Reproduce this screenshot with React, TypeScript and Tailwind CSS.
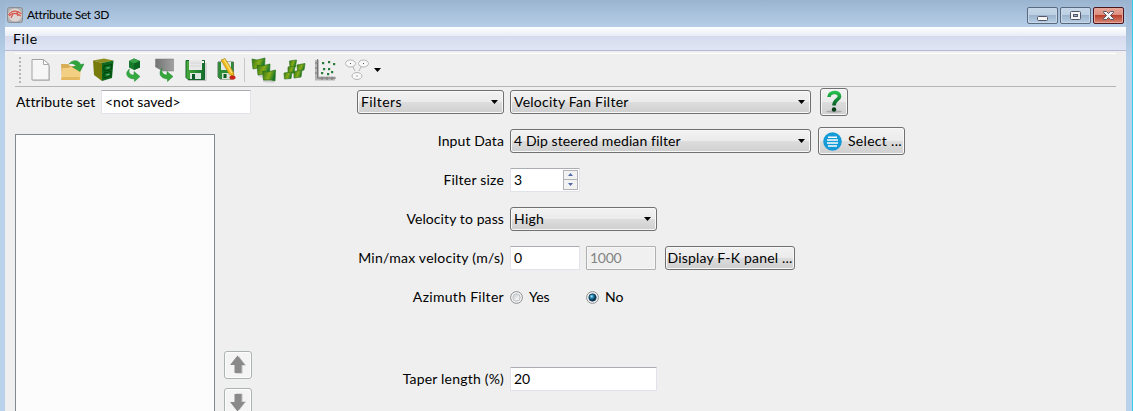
import React, { useState } from "react";

const NewIcon = () => (
  <svg width="24" height="24" viewBox="0 0 24 24">
    <path d="M4 2.500h11l6 6v14.500H4z" fill="#888" opacity=".35" />
    <path d="M3 1.500h11.500l5.500 5v15.500H3z" fill="#f6f6f6" stroke="#a2a2a2" />
    <path d="M14.500 1.500v5H20z" fill="#fff" stroke="#aaa" />
  </svg>
);
const OpenIcon = () => (
  <svg width="24" height="24" viewBox="0 0 24 24">
    <path d="M1 6h7l2 2h10v13H2z" fill="#d9ad55" />
    <path d="M1 22l1.500-12H8l2-1h11l-1 13z" fill="#f3cf83" />
    <path d="M1 22h18.500l.5-3H2z" fill="#e5b860" />
    <path d="M9 6C13 1 19 2 20.500 6.500L24 6l-4 7.500L12.500 9l3.500-.6C14.500 5.500 12 5 9 6z" fill="#30a43b" stroke="#17872a" strokeWidth=".5" />
  </svg>
);
const CabinetIcon = () => (
  <svg width="24" height="24" viewBox="0 0 24 24">
    <path d="M2 2.500L13 .5l9.500 2L11 5z" fill="#8d9020" />
    <path d="M2 2.500L11 5v18l-8-6z" fill="#777b09" />
    <path d="M11 5l11.500-2.500L21 20l-10 3z" fill="#0d681c" />
    <path d="M13 8l7.500-1.500-.3 5L13 13zM13 15l7-1.500-.3 4.500L13 20z" fill="#087525" stroke="#003f0b" />
    <path d="M15.500 9.500l3-.5v1.200l-3 .6zM15.500 16.300l3-.6v1.200l-3 .6z" fill="#7ab07c" />
  </svg>
);
const ImportIcon = () => (
  <svg width="24" height="24" viewBox="0 0 24 24">
    <path d="M7 3l5-2.500L18 3v6.500L12 12 7 9.500z" fill="#177a2c" />
    <path d="M7 3l5-2.500L18 3l-6 2.500z" fill="#39a14a" />
    <path d="M12 5.500L18 3v6.500L12 12z" fill="#0a6520" />
    <path d="M7.500 11C6 15 8.500 17 12 17v-3.500l6 5-5.500 5V21C5 21 2 15 7.500 11z" fill="#35aa3f" stroke="#238a34" strokeWidth=".5" />
  </svg>
);
const ScreenIcon = () => (
  <svg width="24" height="24" viewBox="0 0 24 24">
    <defs><linearGradient id="screen"><stop stopColor="#737573" /><stop offset="1" stopColor="#a0a1a0" /></linearGradient></defs>
    <path d="M2.500 1h18v12H10L2.500 9z" fill="url(#screen)" stroke="#777" strokeWidth=".5" />
    <path d="M9 10C8 14 10 17 14 17v-3.500l6 5-5.500 5V21C7 20.500 5 15 9 10z" fill="#35a83b" stroke="#208331" strokeWidth=".5" />
  </svg>
);
const SaveIcon = () => (
  <svg width="24" height="24" viewBox="0 0 24 24">
    <defs><linearGradient id="save"><stop stopColor="#48ac3b" /><stop offset="1" stopColor="#136e2c" /></linearGradient></defs>
    <path d="M4 22.500h18V5" fill="none" stroke="#999" opacity=".6" />
    <path d="M2 2.500h18.500v19H4l-2-2z" fill="url(#save)" stroke="#14652b" />
    <path d="M5 2h13v10H5z" fill="#e8e8e8" />
    <path d="M6 5h11M6 8h11" stroke="#d6d6d6" />
    <path d="M6 15h11v6H6z" fill="#dce8df" />
    <path d="M8 16h3v5H8z" fill="#075a25" />
    <path d="M18 3h2v2h-2z" fill="#f3fff3" />
  </svg>
);
const SaveAsIcon = () => (
  <svg width="24" height="24" viewBox="0 0 24 24">
    <path d="M3 4h15.500v17H5l-2-2z" fill="#2b8e36" stroke="#56795a" />
    <path d="M6 4h10v8H6z" fill="#e5e9e5" /><path d="M7 15h9v6H7z" fill="#d8e4d8" /><path d="M8.500 16h3v4h-3z" fill="#0b5b20" />
    <path d="M6 2l4-1.500 8.500 14 .5 4-4.500-2z" fill="#f2b91a" stroke="#b08923" strokeWidth=".7" />
    <path d="M9 1.500l8 13.500" stroke="#ffe47a" strokeWidth="1.300" />
    <ellipse cx="17.500" cy="19.500" rx="3" ry="2" fill="#ca2118" />
  </svg>
);
const CascadeIcon = () => (
  <svg width="26" height="26" viewBox="0 0 26 26">
    <defs><linearGradient id="leaf" x2="1" y2=".3"><stop stopColor="#2c7016" /><stop offset=".6" stopColor="#8bae18" /><stop offset="1" stopColor="#16752a" /></linearGradient></defs>
    <path d="M4 13l3 1v5l5 2v4l11 1-1-12" fill="#999" opacity=".35" />
    {["M1 2l5 1 8-2-.5 9-4 .5L2 12z", "M6 8l5 1 8-2-.5 9-4 .5L7 18z", "M11.500 14l5 1 8-2-.5 11-4-1-7.500 0z"].map((d) => <path key={d} d={d} fill="url(#leaf)" stroke="#29741b" strokeWidth=".7" />)}
  </svg>
);
const CrossIcon = () => (
  <svg width="26" height="26" viewBox="0 0 26 26">
    {["M7.500 4l7-1-1 7H8z", "M15 8l8-1.500-1 6.500-6.500 1z", "M6 10l7-1-1 7H6z", "M12 14.500l8-1.500-1 7-7 1z", "M2 16l8-1-1 6.500-6.500.5z"].map((d) => <path key={d} d={d} fill="url(#leaf)" stroke="#34781b" strokeWidth=".7" />)}
  </svg>
);
const ScatterIcon = () => (
  <svg width="24" height="24" viewBox="0 0 24 24">
    <path d="M3 2v18.500h18" fill="none" stroke="#b5b5b5" strokeWidth="4" />
    <path d="M3.500 1v19H22M1 5h3M1 10h3M1 15h3M8 19v3M13 19v3M18 19v3" fill="none" stroke="#777" />
    {[[8, 4], [14, 3], [19, 5], [9, 10], [14, 10], [7, 14], [17, 13], [13, 15]].map(([x, y]) => <rect key={`${x}-${y}`} x={x} y={y} width="2.200" height="2.200" fill="#277b3a" />)}
  </svg>
);
const NodesIcon = () => (
  <svg width="26" height="26" viewBox="0 0 26 26" fill="#f8f8f8" stroke="#b5b5b5">
    <path d="M8 8l3 6M18 8l-3 6" />
    <ellipse cx="6.500" cy="6.500" rx="5" ry="3.500" /><ellipse cx="19.500" cy="6.500" rx="5" ry="3.500" /><ellipse cx="13" cy="19" rx="5" ry="3.500" />
    <path d="M6 6.500h1M19 6.500h1M12.500 19h1" stroke="#555" />
  </svg>
);

const icons = [NewIcon, OpenIcon, CabinetIcon, ImportIcon, ScreenIcon, SaveIcon, SaveAsIcon];
const plots = [CascadeIcon, CrossIcon, ScatterIcon, NodesIcon];

const Triangle = () => <svg className="shrink-0" width="7" height="4" viewBox="0 0 7 4"><path d="M0 0h7L3.500 4z" fill="#000" /></svg>;

const raised = "flex shrink-0 items-center rounded-[3px] border border-[#707070] bg-[linear-gradient(#f2f2f2,#ebebeb_50%,#dddddd_50%,#cfcfcf)] shadow-[inset_0_0_0_1px_#f8f8f8]";
const field = "h-6 shrink-0 rounded-[1px] border border-[#e2e3ea] border-t-[#abadb3] bg-white pb-px pl-[3px] outline-none";
const caption = "h-[17px] w-[31px] rounded-[2px] border border-[#596a7f] bg-[linear-gradient(#c5d6e8,#bdd0e3_45%,#98b1ca_45%,#b8cee4)] shadow-[inset_0_0_0_1px_#c5d7e9]";

function Combo({ text, className }: { text: string; className: string }) {
  return (
    <button className={`h-6 justify-between pl-[3px] pr-[5px] ${raised} ${className}`}>
      <span className="whitespace-nowrap">{text}</span><Triangle />
    </button>
  );
}

function Row({ label, tracking, children }: { label: string; tracking: string; children: React.ReactNode }) {
  return (
    <div className="flex h-[30px] items-center">
      <span className={`mr-1.5 w-[163px] shrink-0 whitespace-nowrap text-right ${tracking}`}>{label}</span>
      {children}
    </div>
  );
}

function Radio({ on, onClick, label }: { on: boolean; onClick: () => void; label: string }) {
  return (
    <button onClick={onClick} className="flex w-[76px] items-center gap-1.5">
      <svg width="13" height="13" viewBox="0 0 13 13">
        <defs><radialGradient id="dot" cx=".38" cy=".35"><stop stopColor="#b2e6fa" /><stop offset=".5" stopColor="#2383b3" /><stop offset="1" stopColor="#0b3850" /></radialGradient></defs>
        <circle cx="6.500" cy="6.500" r="5.900" fill="#f4f4f4" stroke="#8b8e90" />
        <circle cx="6.500" cy="6.500" r="3.700" fill={on ? "url(#dot)" : "#dcdfe1"} stroke={on ? "#123a55" : "#b5b9bc"} strokeWidth=".8" />
        {!on && <path d="M4 9l5-5v5z" fill="#f0f0f0" />}
      </svg>
      <span>{label}</span>
    </button>
  );
}

function MoveButton({ down = false }: { down?: boolean }) {
  return (
    <button className="flex size-7 items-center justify-center rounded-[3px] border border-[#adb2b5] bg-[#f4f4f4] shadow-[inset_0_0_0_1px_#fcfcfc]">
      <svg width="18" height="22" viewBox="0 0 18 22">
        <g transform={down ? "translate(0 22) scale(1 -1)" : undefined}>
          <path d="M10 2.500l7 9h-3.500v8H7v-8" fill="#c0c0c0" />
          <path d="M8.500 1.500L16 11h-3.500v8h-7v-8H1z" fill="#8a8a8a" />
        </g>
      </svg>
    </button>
  );
}

function TitleBar() {
  return (
    <header className="flex h-[27px] shrink-0 items-start bg-linear-to-b from-[#9ab4d0] to-[#b6cee8] pl-[2px] pr-[2px]">
      <svg className="mt-[7px]" width="16" height="16" viewBox="0 0 16 16">
        <rect x=".5" y=".5" width="15" height="15" rx="2" fill="#b0b0b0" stroke="#8b8f93" />
        <ellipse cx="8" cy="8" rx="7" ry="6.500" fill="#ddd5d3" />
        <path d="M1.500 8c3-5 9-5 13-1M2 9c4-4 7-3 12 0M4 11l2-4M10 5l1 4" fill="none" stroke="#d8554c" strokeWidth="1.200" />
      </svg>
      <span className="ml-1 mt-[6px] whitespace-nowrap text-[12px] leading-[18px] tracking-[-0.3px]">Attribute Set 3D</span>
      <div className="ml-auto mt-[7px] flex gap-[2px]">
        <button className={caption}>
          <svg width="29" height="15" viewBox="0 0 29 15"><rect x="9.500" y="8.500" width="10" height="4" rx="1" fill="#f5f5f5" stroke="#535666" /></svg>
        </button>
        <button className={caption}>
          <svg width="29" height="15" viewBox="0 0 29 15"><rect x="9.500" y="3.500" width="10" height="8" rx="1" fill="#f5f5f5" stroke="#535666" /><rect x="12.500" y="6.500" width="4" height="2" fill="#98b1ca" stroke="#535666" /></svg>
        </button>
        <button className="h-[17px] w-[31px] rounded-[2px] border border-[#4c1620] bg-[linear-gradient(#e8a698,#dc8e7f_45%,#b83a25_45%,#d78876)] shadow-[inset_0_0_0_1px_#e3a79b]">
          <svg width="29" height="15" viewBox="0 0 29 15"><path d="M9.500 3.500h3l2 2 2-2h3v1l-3 3 3 3v1h-3l-2-2-2 2h-3v-1l3-3-3-3z" fill="#f5f5f5" stroke="#535666" /></svg>
        </button>
      </div>
    </header>
  );
}

export default function App() {
  const [azimuth, setAzimuth] = useState(false);
  return (
    <div className="flex h-[411px] w-[1133px] overflow-hidden bg-linear-to-b from-[#9ab4d0] to-[#b9d1ea] to-[60px] font-['Lato','Liberation_Sans',sans-serif] text-[14px] leading-[18px] text-black">
      <div className="ml-[5px] flex w-[1121px] shrink-0 flex-col">
        <TitleBar />
        <nav className="flex h-6 shrink-0 items-center border-b border-[#b4b8d0] bg-[linear-gradient(#ffffff,#e9edf6_38%,#d5daed_38%,#e0e5f5)] pl-2">
          <button className="tracking-[0.7px]">File</button>
        </nav>
        <div className="flex grow flex-col bg-[#efefef] pt-[2px]">
          <div className="ml-[10px] mr-[10px] flex h-[34px] shrink-0 items-center border-b border-t border-b-[#b5b5b5] border-t-white">
            <svg className="ml-1" width="3" height="28" viewBox="0 0 3 28"><path d="M1 1v27" stroke="#b6b6b6" strokeWidth="2" strokeDasharray="2 2" /></svg>
            <div className="ml-[3px] flex">
              {icons.map((Icon, i) => <button key={i} className="flex size-[31px] items-center justify-center"><Icon /></button>)}
            </div>
            <div className="ml-[2px] h-6 w-px bg-[#c8c8c8]" />
            <div className="ml-[3px] flex">
              {plots.map((Icon, i) => <button key={i} className="flex size-[31px] items-center justify-center"><Icon /></button>)}
            </div>
            <div className="ml-[2px]"><Triangle /></div>
          </div>
          <main className="flex grow">
            <section className="ml-[10px] w-[237px] shrink-0">
              <div className="flex h-[30px] items-center">
                <label className="w-[86px] whitespace-nowrap pl-px tracking-[0.15px]">Attribute set</label>
                <input className={`w-[150px] ${field}`} defaultValue="<not saved>" />
              </div>
              <div className="mt-[17px] flex gap-[9px]">
                <div className="h-[277px] w-[200px] border border-b-0 border-[#828790] bg-[#fcfcfc]" />
                <div className="flex flex-col gap-[9px] pt-[217px]">
                  <MoveButton /><MoveButton down />
                </div>
              </div>
            </section>
            <section className="ml-[89px] flex flex-col gap-[9px]">
              <div className="flex h-[30px] items-center pl-[16px]">
                <Combo text="Filters" className="w-[147px] tracking-[0.4px]" />
                <Combo text="Velocity Fan Filter" className="ml-1.5 w-[301px] tracking-[0.25px]" />
                <button className={`ml-[9px] size-7 justify-center ${raised}`}>
                  <svg width="20" height="24" viewBox="0 0 20 24">
                    <defs><linearGradient id="help" x2="0" y2="1"><stop stopColor="#27bd4b" /><stop offset="1" stopColor="#075d28" /></linearGradient></defs>
                    <ellipse cx="10" cy="21.500" rx="8" ry="1.200" fill="#aaa" />
                    <path d="M5 7c0-6 11-6 10.500-.5C15.200 10 10 9.500 10 15.500" fill="none" stroke="url(#help)" strokeWidth="3.600" />
                    <circle cx="10" cy="19.500" r="2.200" fill="#073b19" />
                  </svg>
                </button>
              </div>
              <Row label="Input Data" tracking="tracking-[0.1px]">
                <Combo text="4 Dip steered median filter" className="w-[301px] tracking-[0.1px]" />
                <button className={`ml-[7px] h-7 w-[87px] whitespace-nowrap pl-1 ${raised}`}>
                  <svg width="19" height="19" viewBox="0 0 19 19">
                    <circle cx="9.500" cy="9.500" r="9.300" fill="#149bd7" />
                    <path d="M5 5.200h9M4 8.100h11M4 11h11M5 13.900h9" stroke="#fff" strokeWidth="1.500" />
                  </svg>
                  <span className="ml-1.5 tracking-[0.3px]">Select ...</span>
                </button>
              </Row>
              <Row label="Filter size" tracking="tracking-[0.2px]">
                <div className={`flex w-[70px] items-center justify-between ${field}`}>
                  <span>3</span>
                  <div className="mr-px flex h-5 w-[15px] flex-col border border-[#b0b2b6] bg-[#f2f2f2]">
                    <button className="flex grow items-center justify-center border-b border-[#b0b2b6]"><svg width="5" height="3" viewBox="0 0 5 3"><path d="M0 3h5L2.500 0z" fill="#5369a8" /></svg></button>
                    <button className="flex grow items-center justify-center"><svg width="5" height="3" viewBox="0 0 5 3"><path d="M0 0h5L2.500 3z" fill="#5369a8" /></svg></button>
                  </div>
                </div>
              </Row>
              <Row label="Velocity to pass" tracking="tracking-[0.1px]">
                <Combo text="High" className="w-[147px] tracking-[0.3px]" />
              </Row>
              <Row label="Min/max velocity (m/s)" tracking="tracking-[0.25px]">
                <input className={`w-[70px] ${field}`} defaultValue="0" />
                <input disabled className="ml-1.5 h-6 w-[70px] rounded-[1px] border border-[#afafaf] bg-[#f0f0f0] pb-px pl-[3px] tracking-[-0.3px] text-[#838383] shadow-[inset_0_0_0_1px_#f7f7f7]" defaultValue="1000" />
                <button className={`ml-[9px] h-6 w-[130px] justify-center whitespace-nowrap tracking-[0.2px] ${raised}`}>Display F-K panel ...</button>
              </Row>
              <Row label="Azimuth Filter" tracking="tracking-[0.3px]">
                <Radio on={azimuth} onClick={() => setAzimuth(true)} label="Yes" />
                <Radio on={!azimuth} onClick={() => setAzimuth(false)} label="No" />
              </Row>
              <div className="mt-[43px]">
                <Row label="Taper length (%)" tracking="tracking-[0.2px]">
                  <input className={`w-[147px] ${field}`} defaultValue="20" />
                </Row>
              </div>
            </section>
          </main>
        </div>
      </div>
      <div className="ml-auto w-px bg-[#37cbe9]" />
    </div>
  );
}
